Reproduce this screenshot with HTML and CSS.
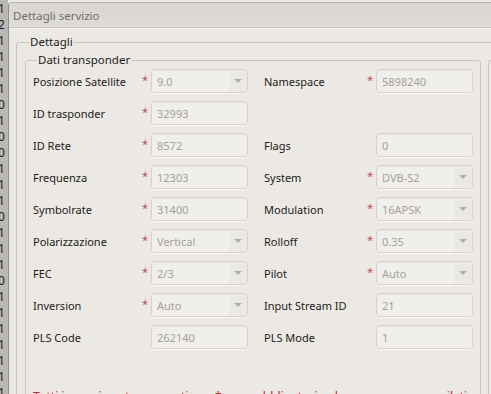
FILE: index.html
```html
<!DOCTYPE html>
<html lang="it">
<head>
<meta charset="utf-8">
<title>Dettagli servizio</title>
<link rel="stylesheet" href="styles.css">
</head>
<body>
<div class="screen">
  <div class="behind">
    <span>1</span><span>2</span><span>1</span><span>1</span><span>1</span><span>1</span><span>0</span><span>1</span><span>0</span><span>0</span><span>1</span><span>1</span><span>1</span><span>0</span><span>1</span><span>1</span><span>1</span><span>0</span><span>1</span><span>1</span><span>1</span><span>1</span><span>1</span><span>1</span><span>1</span>
  </div>
  <div class="dialog">
    <div class="titlebar">Dettagli servizio</div>
    <div class="dialog-body">
      <fieldset class="group outer">
        <legend>Dettagli</legend>
        <div class="columns">
          <fieldset class="group transponder">
            <legend>Dati transponder</legend>
            <div class="form-grid">
              <span class="lbl">Posizione Satellite</span><span class="req">*</span>
              <div class="field combo"><span class="val">9.0</span><span class="btn"><i></i></span></div>
              <span class="lbl">Namespace</span><span class="req">*</span>
              <div class="field"><span class="val">5898240</span></div>

              <span class="lbl">ID trasponder</span><span class="req">*</span>
              <div class="field"><span class="val">32993</span></div>
              <span class="lbl"></span><span class="req"></span><span></span>

              <span class="lbl">ID Rete</span><span class="req">*</span>
              <div class="field"><span class="val">8572</span></div>
              <span class="lbl">Flags</span><span class="req"></span>
              <div class="field"><span class="val">0</span></div>

              <span class="lbl">Frequenza</span><span class="req">*</span>
              <div class="field"><span class="val">12303</span></div>
              <span class="lbl">System</span><span class="req">*</span>
              <div class="field combo"><span class="val">DVB-S2</span><span class="btn"><i></i></span></div>

              <span class="lbl">Symbolrate</span><span class="req">*</span>
              <div class="field"><span class="val">31400</span></div>
              <span class="lbl">Modulation</span><span class="req">*</span>
              <div class="field combo"><span class="val">16APSK</span><span class="btn"><i></i></span></div>

              <span class="lbl">Polarizzazione</span><span class="req">*</span>
              <div class="field combo"><span class="val">Vertical</span><span class="btn"><i></i></span></div>
              <span class="lbl">Rolloff</span><span class="req">*</span>
              <div class="field combo"><span class="val">0.35</span><span class="btn"><i></i></span></div>

              <span class="lbl">FEC</span><span class="req">*</span>
              <div class="field combo"><span class="val">2/3</span><span class="btn"><i></i></span></div>
              <span class="lbl">Pilot</span><span class="req">*</span>
              <div class="field combo"><span class="val">Auto</span><span class="btn"><i></i></span></div>

              <span class="lbl">Inversion</span><span class="req">*</span>
              <div class="field combo"><span class="val">Auto</span><span class="btn"><i></i></span></div>
              <span class="lbl">Input Stream ID</span><span class="req"></span>
              <div class="field"><span class="val">21</span></div>

              <span class="lbl">PLS Code</span><span class="req"></span>
              <div class="field"><span class="val">262140</span></div>
              <span class="lbl">PLS Mode</span><span class="req"></span>
              <div class="field"><span class="val">1</span></div>
            </div>
            <p class="note">Tutti i campi contrassegnati con * sono obbligatori e devono essere compilati</p>
          </fieldset>
          <fieldset class="group side">
            <legend>Servizio</legend>
          </fieldset>
        </div>
      </fieldset>
    </div>
  </div>
</div>
</body>
</html>
```

FILE: styles.css
```css
* { box-sizing: border-box; }

html, body {
  margin: 0;
  padding: 0;
  background: #ece9e4;
}

body {
  font-family: "Noto Sans", "Open Sans", sans-serif;
  font-size: 11px;
  color: #1b1b1b;
}

.screen {
  display: flex;
  width: 491px;
  height: 394px;
  overflow: hidden;
}

.behind {
  flex: 0 0 8px;
  display: flex;
  flex-direction: column;
  padding-top: 1px;
  background: #b9b8b6;
  overflow: hidden;
  font-size: 12px;
  line-height: 16px;
  color: #202020;
  text-indent: -2px;
}

.dialog {
  flex: 0 0 auto;
  width: 700px;
  margin-top: 2px;
  border-left: 1px solid #8f8e8c;
  border-top: 1px solid #b8b5b1;
  border-top-left-radius: 4px;
  background: #ece9e4;
  display: flex;
  flex-direction: column;
}

.titlebar {
  flex: 0 0 25px;
  padding-left: 4px;
  display: flex;
  align-items: center;
  color: #6f6d6a;
  font-size: 11.5px;
  background: linear-gradient(#d9d5d0, #dfdcd7);
  border-bottom: 1px solid #c7c3be;
  border-top-left-radius: 3px;
}

.dialog-body {
  flex: 0 0 auto;
  padding: 5px 0 0 7px;
  border-top: 1px solid #f4f2ef;
}

.group {
  margin: 0;
  border: 1px solid #c9c6c1;
  border-radius: 3px;
  min-inline-size: 0;
}

.group > legend {
  margin-left: 4px;
  padding: 0 1px;
  line-height: 16px;
  font-size: 11.5px;
  color: #1b1b1b;
}

.outer {
  padding: 2px 0 0 8px;
  height: 400px;
}

.columns {
  display: flex;
  gap: 7px;
}

.transponder {
  flex: 0 0 456px;
  padding: 1px 7px 0 7px;
  height: 400px;
}

.side {
  flex: 0 0 200px;
  padding: 0;
  height: 400px;
}

.side > legend {
  visibility: hidden;
}

.form-grid {
  display: grid;
  grid-template-columns: 108px 10px 97px 118px 10px 97px;
  row-gap: 8px;
  grid-auto-rows: 24px;
  align-items: center;
}

.form-grid > .lbl:nth-child(6n+4) {
  margin-left: 16px;
}

.lbl {
  white-space: nowrap;
}

.req {
  color: #d0444c;
  padding-left: 1px;
  font-size: 11px;
  margin-top: -3px;
}

.field {
  height: 24px;
  display: flex;
  align-items: center;
  padding-left: 5px;
  border: 1px solid #d6d3ce;
  border-radius: 3px;
  background: #f1efeb;
  box-shadow: inset 0 1px 1px rgba(0, 0, 0, 0.04), 0 1px 0 #f8f7f5;
  color: #a4a09c;
}

.val {
  flex: 1;
  white-space: nowrap;
}

.combo .btn {
  flex: 0 0 18px;
  height: 100%;
  display: flex;
  align-items: center;
  justify-content: center;
  background: #ebe9e5;
  border-radius: 0 2px 2px 0;
}

.combo .btn i {
  width: 0;
  height: 0;
  border-left: 4px solid transparent;
  border-right: 4px solid transparent;
  border-top: 4px solid #b0aeab;
}

.note {
  margin: 40px 0 0 0;
  line-height: 16px;
  font-size: 12px;
  color: #c3232e;
  white-space: nowrap;
}
```
